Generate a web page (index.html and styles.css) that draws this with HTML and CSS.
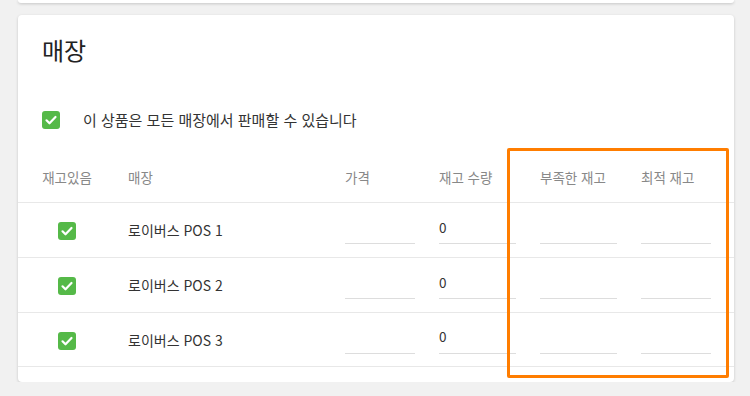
FILE: index.html
```html
<!DOCTYPE html>
<html lang="ko">
  <head>
    <meta charset="UTF-8" />
    <meta name="viewport" content="width=device-width, initial-scale=1.0" />
    <title>매장</title>
    <link rel="stylesheet" href="styles.css">
  </head>
  <body>
    <div class="forrige"></div>
    <section class="kort">
      <h1>매장</h1>
      <label class="alle">
        <span class="boks"><svg viewBox="0 0 18 18"><path d="M4.5 9.3l3 3 6-6.3" /></svg></span>
        이 상품은 모든 매장에서 판매할 수 있습니다
      </label>
      <div class="tabel">
        <div class="raekke hoved">
          <div class="midt">재고있음</div>
          <div>매장</div>
          <div>가격</div>
          <div>재고 수량</div>
          <div>부족한 재고</div>
          <div>최적 재고</div>
        </div>
        <div class="raekke">
          <div class="midt"><span class="boks"><svg viewBox="0 0 18 18"><path d="M4.5 9.3l3 3 6-6.3" /></svg></span></div>
          <div class="navn">로이버스 POS 1</div>
          <div><input class="felt" value=""></div>
          <div><input class="felt" value="0"></div>
          <div><input class="felt" value=""></div>
          <div><input class="felt" value=""></div>
        </div>
        <div class="raekke">
          <div class="midt"><span class="boks"><svg viewBox="0 0 18 18"><path d="M4.5 9.3l3 3 6-6.3" /></svg></span></div>
          <div class="navn">로이버스 POS 2</div>
          <div><input class="felt" value=""></div>
          <div><input class="felt" value="0"></div>
          <div><input class="felt" value=""></div>
          <div><input class="felt" value=""></div>
        </div>
        <div class="raekke">
          <div class="midt"><span class="boks"><svg viewBox="0 0 18 18"><path d="M4.5 9.3l3 3 6-6.3" /></svg></span></div>
          <div class="navn">로이버스 POS 3</div>
          <div><input class="felt" value=""></div>
          <div><input class="felt" value="0"></div>
          <div><input class="felt" value=""></div>
          <div><input class="felt" value=""></div>
        </div>
      </div>
      <!-- markering af lager-kolonnerne -->
      <div class="markering"></div>
    </section>
  </body>
</html>
```

FILE: styles.css
```css
* {
  box-sizing: border-box;
}
body {
  margin: 0;
  background-color: #f1f1f1;
  font-family: "Noto Sans CJK KR", "Noto Sans", sans-serif;
  color: #333;
}

.forrige {
  height: 3px;
  margin: 0 16px 0 18px;
  background-color: white;
  border-radius: 0 0 4px 4px;
  box-shadow: 0 1px 3px rgba(0, 0, 0, 0.18);
}

.kort {
  position: relative;
  width: 716px;
  margin: 12px 0 0 18px;
  padding: 20px 0 15px;
  background-color: white;
  border-radius: 4px;
  box-shadow: 0 1px 3px rgba(0, 0, 0, 0.18);
}

h1 {
  margin: 0 0 0 24px;
  font-size: 24px;
  font-weight: normal;
  line-height: 30px;
  color: #222;
}

.alle {
  display: flex;
  align-items: center;
  gap: 23px;
  margin: 46px 0 0 24px;
  font-size: 15px;
  line-height: 18px;
  color: #333;
}

.boks {
  display: inline-flex;
  width: 18px;
  height: 18px;
  border-radius: 3px;
  background-color: #55b948;
}
.boks svg {
  width: 18px;
  height: 18px;
  fill: none;
  stroke: white;
  stroke-width: 2.2;
  stroke-linecap: round;
  stroke-linejoin: round;
}

.tabel {
  margin-top: 22px;
}
.raekke {
  display: grid;
  grid-template-columns: 86px 217px 94px 101px 101px 70px;
  align-items: center;
  padding-left: 24px;
  height: 55px;
  border-bottom: 1px solid #e8e8e8;
  font-size: 13.5px;
}
.raekke:last-child {
  height: 54px;
}
.hoved {
  height: 52px;
  color: #888;
}
.midt {
  width: 50px;
  text-align: center;
}
.midt .boks {
  vertical-align: middle;
  margin-top: -2px;
}
.navn {
  font-size: 14px;
  color: #333;
}

.felt {
  width: 70px;
  height: 28px;
  padding: 0 0 6px;
  border: none;
  border-bottom: 1px solid #ddd;
  font-family: inherit;
  font-size: 13.5px;
  color: #333;
  outline: none;
}
.raekke div:nth-child(4) .felt,
.raekke div:nth-child(5) .felt {
  width: 77px;
}

.markering {
  position: absolute;
  left: 489px;
  top: 133px;
  width: 222px;
  height: 230px;
  border: 3px solid #ff7d00;
  border-radius: 2px;
}
```
